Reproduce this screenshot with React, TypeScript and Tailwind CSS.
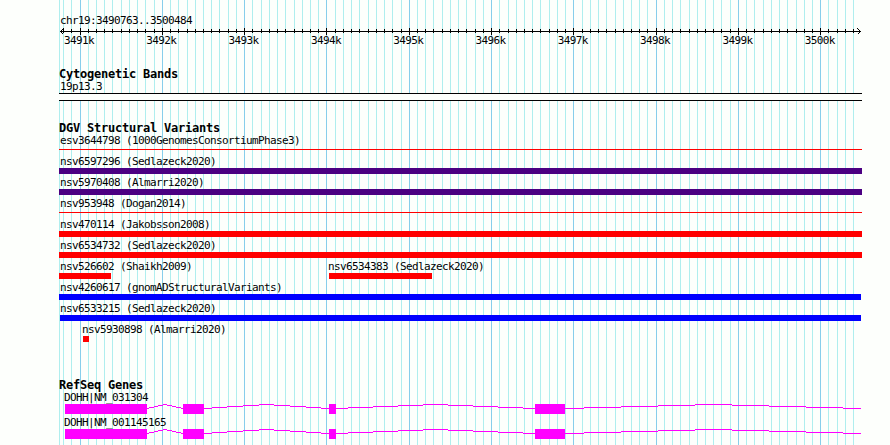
import { ReactNode } from 'react';

const MAJOR = 82.3;
const MINOR = 8.23;
const ORIGIN = 80.05;

// first gridline is clamped to the panel edge
const gridLines = [
    { x: 59, major: false },
    ...Array.from({ length: 97 }, (_, i) => i - 2).map(i => ({
        x: Math.floor(ORIGIN + i * MINOR),
        major: i % 10 === 0,
    })),
];

const labels = ['3491k', '3492k', '3493k', '3494k', '3495k', '3496k', '3497k', '3498k', '3499k', '3500k'];

type Feature = { name: string; start: number; width: number; color: string; thin?: boolean };

const variants: Feature[][] = [
    [{ name: 'esv3644798 (1000GenomesConsortiumPhase3)', start: 59, width: 803, color: 'bg-[#ff0000]', thin: true }],
    [{ name: 'nsv6597296 (Sedlazeck2020)', start: 59, width: 803, color: 'bg-[#4b0082]' }],
    [{ name: 'nsv5970408 (Almarri2020)', start: 59, width: 803, color: 'bg-[#4b0082]' }],
    [{ name: 'nsv953948 (Dogan2014)', start: 59, width: 803, color: 'bg-[#ff0000]', thin: true }],
    [{ name: 'nsv470114 (Jakobsson2008)', start: 59, width: 803, color: 'bg-[#ff0000]' }],
    [{ name: 'nsv6534732 (Sedlazeck2020)', start: 59, width: 803, color: 'bg-[#ff0000]' }],
    [
        { name: 'nsv526602 (Shaikh2009)', start: 59, width: 52, color: 'bg-[#ff0000]' },
        { name: 'nsv6534383 (Sedlazeck2020)', start: 329, width: 103, color: 'bg-[#ff0000]' },
    ],
    [{ name: 'nsv4260617 (gnomADStructuralVariants)', start: 59, width: 802, color: 'bg-[#0000ff]' }],
    [{ name: 'nsv6533215 (Sedlazeck2020)', start: 60, width: 801, color: 'bg-[#0000ff]' }],
    [{ name: 'nsv5930898 (Almarri2020)', start: 83, width: 6, color: 'bg-[#ff0000]' }],
];

const genes = ['DOHH|NM_031304', 'DOHH|NM_001145165'];
const exons = [[65, 147], [183, 204], [329, 336], [535, 565]];
const introns = [[147, 183], [204, 329], [336, 535], [565, 861]];

// Hat-shaped connector, drawn one pixel row at a time
function intronPath([from, to]: number[]) {
    const step = (to - from) / 8;
    let d = '';
    for (let i = 0; i <= 8; i++) {
        const a = Math.round(Math.max(from, from + (i - 0.5) * step));
        const b = Math.round(Math.min(to, from + (i + 0.5) * step));
        d += `M${a} ${Math.abs(i - 4) + 0.5}H${b}`;
    }
    return d;
}

function Label({ children }: { children: ReactNode }) {
    return <div className="h-3 whitespace-pre text-[11px] leading-3 tracking-[-0.622px]">{children}</div>;
}

function Title({ children }: { children: ReactNode }) {
    return <h2 className="h-[13px] pl-[59px] whitespace-pre text-[12px] font-bold leading-[13px] tracking-[-0.224px]">{children}</h2>;
}

function Grid() {
    return (
        <svg className="absolute inset-0" width="890" height="445" shapeRendering="crispEdges">
            {gridLines.map(l => (
                <rect key={l.x} x={l.x} y="0" width="1" height="445" fill={l.major ? '#87ceeb' : '#afeeee'} />
            ))}
        </svg>
    );
}

function Ruler() {
    return (
        <div>
            <div className="pl-[60px]"><Label>chr19:3490763..3500484</Label></div>
            <svg className="block" width="890" height="8" shapeRendering="crispEdges">
                <path d="M60 4.5H861" stroke="#000" />
                {gridLines.slice(1).map(l => (
                    <rect key={l.x} x={l.x} y={l.major ? 1 : 2} width="1" height={l.major ? 7 : 4} />
                ))}
                <path d="M63.5 1.5L60.5 4.5L63.5 7.5M857.5 1.5L860.5 4.5L857.5 7.5" fill="none" stroke="#000" />
            </svg>
            <div className="flex pl-[64px]">
                {labels.map(label => (
                    <div key={label} className="shrink-0" style={{ width: MAJOR }}><Label>{label}</Label></div>
                ))}
            </div>
        </div>
    );
}

function VariantRow({ features }: { features: Feature[] }) {
    return (
        <div className="grid h-[21px]">
            {features.map(f => (
                <div key={f.name} className="col-start-1 row-start-1" style={{ paddingLeft: f.start }}>
                    <div className={f.start === 59 ? 'pl-px' : f.start > 60 ? '-ml-px' : ''}><Label>{f.name}</Label></div>
                    <div className={`${f.color} ${f.thin ? 'mt-[2px] h-px' : 'h-1.5'}`} style={{ width: f.width }} />
                </div>
            ))}
        </div>
    );
}

function Gene({ name }: { name: string }) {
    return (
        <div className="h-[25px]">
            <div className="pl-[64px]"><Label>{name}</Label></div>
            <svg className="block" width="890" height="10" shapeRendering="crispEdges">
                {exons.map(([a, b]) => (
                    <rect key={a} x={a} y="0" width={b - a} height="10" fill="#ff00ff" />
                ))}
                {introns.map(i => (
                    <path key={i[0]} d={intronPath(i)} stroke="#ff00ff" />
                ))}
            </svg>
        </div>
    );
}

export default function App() {
    return (
        <div className="relative h-[445px] w-[890px] overflow-hidden bg-[#fdfffc] font-['DejaVu_Sans_Mono',monospace] text-black">
            <Grid />
            <div className="relative pt-[15px]">
                <Ruler />
                <section className="pt-[21px]">
                    <Title>Cytogenetic Bands</Title>
                    <div className="pl-[60px]"><Label>19p13.3</Label></div>
                    <div className="ml-[59px] h-2 w-[803px] border-y border-black bg-[#fdfffc]" />
                </section>
                <section className="pt-[21px]">
                    <Title>DGV Structural Variants</Title>
                    {variants.map(row => <VariantRow key={row[0].name} features={row} />)}
                </section>
                <section className="pt-[34px]">
                    <Title>RefSeq Genes</Title>
                    {genes.map(name => <Gene key={name} name={name} />)}
                </section>
            </div>
        </div>
    );
}
